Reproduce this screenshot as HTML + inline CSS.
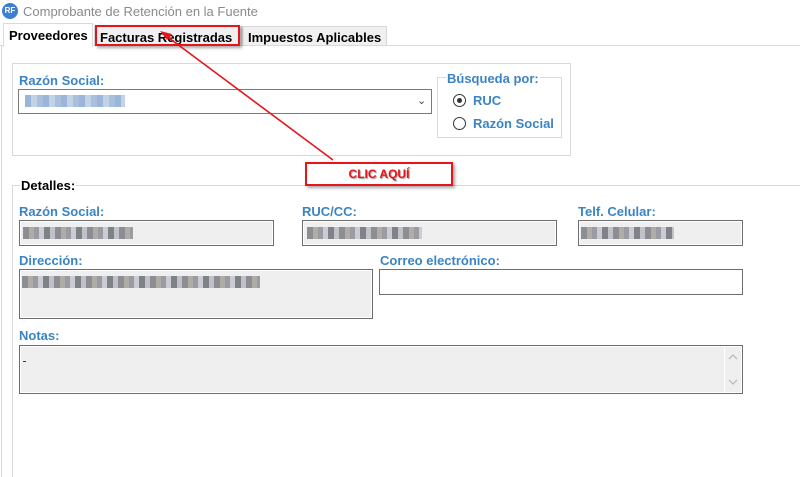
<!DOCTYPE html>
<html style="overflow:hidden;width:800px;height:477px"><head><meta charset="utf-8"><style>
*{margin:0;padding:0;box-sizing:border-box}
body{width:800px;height:477px;background:#fff;position:relative;overflow:hidden;font-family:"Liberation Sans",Arial,sans-serif}
.a{position:absolute}
.lbl{position:absolute;color:#3b84c4;font-weight:bold;font-size:13px}
.box{position:absolute;border:1px solid #6e6e6e;box-shadow:inset 0 0 0 1px #fff;background:#efefef}
.blur{position:absolute;height:12px;background:repeating-linear-gradient(90deg,#8c8e94 0 6px,#b2aca6 6px 11px,#9a9ca2 11px 16px,#c9ccd2 16px 21px,#7f8288 21px 27px,#bfc3c8 27px 32px)}
.tab{position:absolute;top:26px;height:20px;background:#f0f0f0;border:1px solid #d9d9d9;font-size:13px;font-weight:bold;color:#000;padding:3px 3px}
</style></head><body>
<div class="a" style="left:2px;top:3px;width:16px;height:16px;border-radius:50%;background:#3f7fd0;color:#fff;font-size:8px;font-weight:bold;text-align:center;line-height:16px">RF</div>
<div class="a" style="left:23px;top:4px;font-size:13px;color:#8a8a8a">Comprobante de Retención en la Fuente</div>
<div class="a" style="left:0;top:45px;width:800px;border-top:1px solid #d9d9d9"></div>
<div class="a" style="left:1px;top:45px;height:432px;border-left:1px solid #d9d9d9"></div>
<div class="a" style="left:3px;top:23px;width:90px;height:24px;background:#fff;border:1px solid #d9d9d9;border-bottom:none;font-size:13px;font-weight:bold;padding:4px 5px">Proveedores</div>
<div class="tab" style="left:94px;width:148px;padding-left:5px">Facturas Registradas</div>
<div class="tab" style="left:242px;width:145px;padding-left:5px">Impuestos Aplicables</div>
<div class="a" style="left:95px;top:25px;width:145px;height:21px;border:2px solid #e8141c;box-shadow:2px 2px 3px rgba(0,0,0,.35)"></div>

<div class="a" style="left:12px;top:63px;width:559px;height:93px;border:1px solid #d9d9d9"></div>
<div class="lbl" style="left:19px;top:73px">Razón Social:</div>
<div class="a" style="left:18px;top:89px;width:414px;height:25px;border:1px solid #7a7a7a;background:#fff"></div>
<div class="blur" style="left:25px;top:95px;width:100px;background:repeating-linear-gradient(90deg,#9bb6d8 0 6px,#c2d3e6 6px 12px,#a9c0dc 12px 18px)"></div>
<div class="a" style="left:417px;top:94px;font-size:11px;color:#444">&#8964;</div>
<div class="a" style="left:437px;top:77px;width:125px;height:61px;border:1px solid #d9d9d9"></div>
<div class="lbl" style="left:446px;top:71px;background:#fff;padding:0 1px">Búsqueda por:</div>
<div class="a" style="left:453px;top:94px;width:13px;height:13px;border:1px solid #333;border-radius:50%;background:#fff"><div style="margin:3px;width:5px;height:5px;border-radius:50%;background:#333"></div></div>
<div class="lbl" style="left:473px;top:93px">RUC</div>
<div class="a" style="left:453px;top:117px;width:13px;height:13px;border:1px solid #333;border-radius:50%;background:#fff"></div>
<div class="lbl" style="left:473px;top:116px">Razón Social</div>

<div class="a" style="left:12px;top:185px;width:788px;height:292px;border:1px solid #d9d9d9;border-right:none;border-bottom:none"></div>
<div class="a" style="left:20px;top:178px;font-size:13px;font-weight:bold;background:#fff;padding:0 1px">Detalles:</div>

<div class="lbl" style="left:19px;top:204px">Razón Social:</div>
<div class="box" style="left:19px;top:220px;width:255px;height:26px"></div>
<div class="blur" style="left:23px;top:227px;width:110px"></div>
<div class="lbl" style="left:302px;top:204px">RUC/CC:</div>
<div class="box" style="left:302px;top:220px;width:255px;height:26px"></div>
<div class="blur" style="left:307px;top:227px;width:115px"></div>
<div class="lbl" style="left:578px;top:204px">Telf. Celular:</div>
<div class="box" style="left:578px;top:220px;width:165px;height:26px"></div>
<div class="blur" style="left:581px;top:227px;width:93px"></div>
<div class="lbl" style="left:19px;top:253px">Dirección:</div>
<div class="box" style="left:19px;top:269px;width:354px;height:50px"></div>
<div class="blur" style="left:22px;top:276px;width:238px"></div>
<div class="lbl" style="left:380px;top:253px">Correo electrónico:</div>
<div class="box" style="left:379px;top:269px;width:364px;height:26px;background:#fff"></div>
<div class="lbl" style="left:19px;top:328px">Notas:</div>
<div class="box" style="left:19px;top:345px;width:724px;height:49px"></div>
<div class="a" style="left:23px;top:361px;width:3px;height:1px;background:#1a3a8a"></div>
<svg class="a" style="left:724px;top:346px" width="18" height="47"><line x1="0.5" y1="1" x2="0.5" y2="46" stroke="#fff"/><polyline points="5,13 9,9 13,13" fill="none" stroke="#bbb" stroke-width="1.3"/><polyline points="5,34 9,38 13,34" fill="none" stroke="#bbb" stroke-width="1.3"/></svg>

<div class="a" style="left:305px;top:162px;width:148px;height:24px;border:2px solid #e8141c;background:#fff;box-shadow:2px 2px 3px rgba(0,0,0,.35);color:#e8141c;font-weight:bold;font-size:12px;text-align:center;line-height:20px;text-shadow:1px 1px 1px #999">CLIC AQUÍ</div>
<svg class="a" style="left:0;top:0" width="800" height="477"><line x1="333" y1="160" x2="165" y2="35" stroke="#e8141c" stroke-width="1.6"/><polygon points="160,31 172,34 167,40" fill="#e8141c"/></svg>
</body></html>
